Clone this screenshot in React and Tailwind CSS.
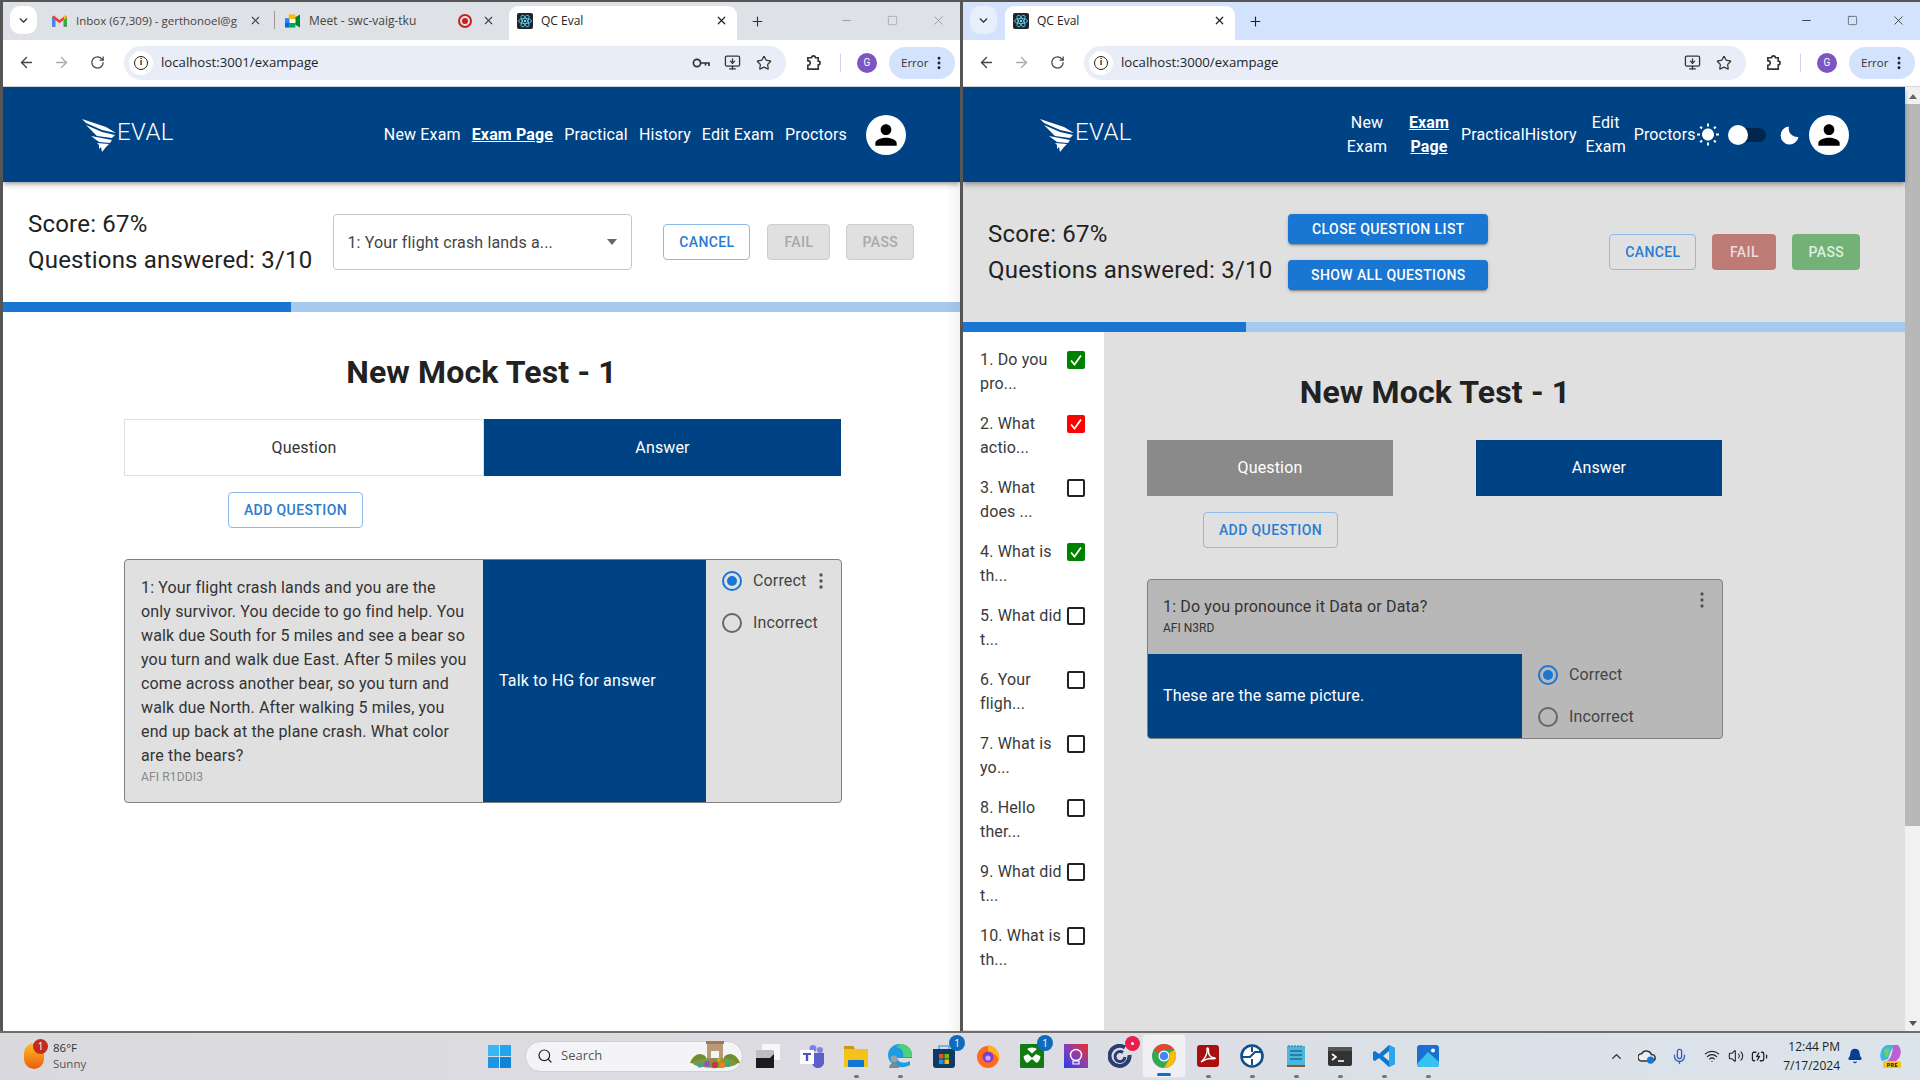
import React from 'react';
import { ArrowLeft, ArrowRight, RotateCw, Star, MonitorDown, EllipsisVertical, Plus, X, Minus, Square, ChevronDown, Search, Mic, Wifi, Volume2, BatteryCharging, Bell, ChevronUp } from 'lucide-react';

const blue = 'bg-[#004385]';

function Avatar() {
  return (
    <div className="w-10 h-10 rounded-full bg-white flex items-center justify-center shrink-0">
      <svg viewBox="0 0 24 24" className="w-8 h-8 fill-black">
        <path d="M12 12c2.21 0 4-1.79 4-4s-1.79-4-4-4-4 1.79-4 4 1.79 4 4 4zm0 2c-2.67 0-8 1.34-8 4v2h16v-2c0-2.66-5.33-4-8-4z" />
      </svg>
    </div>
  );
}

function Logo() {
  return (
    <div className="flex items-center shrink-0 h-10 w-[93px]">
      <svg viewBox="0 0 36 36" className="w-[36px] h-[36px] fill-white shrink-0">
        <path d="M0 3 L24 11 L34 17 L20 14 L4 7 Z" />
        <path d="M4 9 L20 16 L33 19 L30 22 L15 20 Z" />
        <path d="M9 20 L30 24 L28 27 L17 26 Z" />
        <path d="M15 27 L27 28 L24 31 L20 36 L19 31 L17 33 L17 29 Z" />
      </svg>
      <span className="text-white text-[24px] font-light tracking-[0.4px] leading-none -ml-[1px] -mt-[4px]">EVAL</span>
    </div>
  );
}

function ReactIcon() {
  return (
    <svg viewBox="0 0 16 16" className="w-4 h-4 shrink-0">
      <rect width="16" height="16" rx="2" fill="#20232a" />
      <g fill="none" stroke="#61dafb" strokeWidth="0.8">
        <ellipse cx="8" cy="8" rx="6.5" ry="2.6" />
        <ellipse cx="8" cy="8" rx="6.5" ry="2.6" transform="rotate(60 8 8)" />
        <ellipse cx="8" cy="8" rx="6.5" ry="2.6" transform="rotate(120 8 8)" />
      </g>
      <circle cx="8" cy="8" r="1.3" fill="#61dafb" />
    </svg>
  );
}

function GmailIcon() {
  return (
    <svg viewBox="0 0 16 12" className="w-[15px] h-[12px] shrink-0">
      <path d="M0 1.5 V12 H3.5 V5 L8 8.5 L12.5 5 V12 H16 V1.5 L14 0 L8 5 L2 0 Z" fill="#ea4335" />
      <path d="M0 2 V12 H3.5 V5 Z" fill="#4285f4" />
      <path d="M16 2 V12 H12.5 V5 Z" fill="#34a853" />
      <path d="M12.5 5 L16 2 L14 0 L12.5 1.2 Z" fill="#fbbc04" />
    </svg>
  );
}

function MeetIcon() {
  return (
    <svg viewBox="0 0 16 14" className="w-[15px] h-[14px] shrink-0">
      <rect x="0" y="4" width="5" height="6" fill="#2684fc" />
      <rect x="0" y="9" width="5" height="5" fill="#0066da" />
      <path d="M4 0 H11 V5 H4 Z" fill="#fbbc04" />
      <path d="M5 9 H11 V14 H5 Z" fill="#00ac47" />
      <path d="M11 3 L16 0 V14 L11 11 Z" fill="#00832d" />
      <path d="M5 5 H11 V9 H5 Z" fill="#fff" />
    </svg>
  );
}

function BrowserBar({ url, inactive, tabs, showKey }) {
  const tabsBg = inactive ? 'bg-[#dee1e6]' : 'bg-[#d3e3fd]';
  const winIcon = inactive ? 'text-[#8a8c90]' : 'text-[#222]';
  return (
    <div className="shrink-0">
      <div className={`${tabsBg} h-[38px] flex items-end`}>
        <div className={`w-[27px] h-[28px] ml-[7px] mb-[6px] rounded-[10px] flex items-center justify-center shrink-0 ${inactive ? 'bg-white' : 'bg-[#e7effd]'}`}>
          <ChevronDown size={13} strokeWidth={2.5} color="#222" />
        </div>
        {tabs}
        <div className="flex-1" />
        <div className={`flex items-center h-[36px] self-start ${winIcon}`}>
          <Minus size={13} strokeWidth={1.5} />
          <Square size={11} strokeWidth={1.2} className="ml-[34px]" />
          <X size={15} strokeWidth={1.2} className="ml-[33px] mr-[14px]" />
        </div>
      </div>
      <div className="bg-white h-[47px] flex items-center border-b border-[#d8d8d8] text-[#444] pb-[1px]">
        <ArrowLeft size={17} strokeWidth={1.9} className="ml-[15px]" />
        <ArrowRight size={17} strokeWidth={1.9} className="ml-[18px] text-[#aaa]" />
        <RotateCw size={15} strokeWidth={2} className="ml-[20px]" />
        <div className="ml-[19px] w-[662px] h-[34px] rounded-full bg-[#e9edf7] flex items-center pl-[5px] pr-[14px]">
          <div className="w-[24px] h-[24px] rounded-full bg-white flex items-center justify-center shrink-0">
            <div className="w-[14px] h-[14px] rounded-full border-[1.5px] border-[#222] flex items-center justify-center text-[9px] font-bold leading-none text-[#222] font-['Liberation_Sans',sans-serif]">i</div>
          </div>
          <span className="ml-[8px] text-[13.2px] text-[#1f1f1f] font-['Open_Sans',sans-serif]">{url}</span>
          <div className="flex-1" />
          {showKey && (
            <svg viewBox="0 0 18 12" className="w-[18px] h-[12px] mr-[14px]" fill="none" stroke="#333" strokeWidth="1.7">
              <circle cx="5" cy="6" r="3.6" />
              <path d="M8.6 6 H17 V9 M13.5 6 V8.5" />
            </svg>
          )}
          <MonitorDown size={17} strokeWidth={1.8} className="mr-[15px] text-[#333]" />
          <Star size={16} strokeWidth={1.8} className="text-[#333]" />
        </div>
        <svg viewBox="0 0 18 18" className="w-[17px] h-[17px] ml-[19px]" fill="none" stroke="#333" strokeWidth="1.7">
          <path d="M3 4 H7 a2 2 0 0 1 4 0 H14 V7.5 a2 2 0 0 1 0 4 V16 H3 V12 a2.5 2.5 0 0 0 0-5 Z" />
        </svg>
        <div className="w-px h-[18px] bg-[#c7d8f0] ml-[18px]" />
        <div className="w-[20px] h-[20px] rounded-full bg-[#7d57c1] text-white text-[10px] flex items-center justify-center ml-[16px]">G</div>
        <div className="ml-[12px] w-[66px] h-[32px] rounded-full bg-[#d3e3fd] flex items-center pl-[12px] text-[11.5px] text-[#333] font-['Open_Sans',sans-serif]">
          Error
          <EllipsisVertical size={16} strokeWidth={2.4} className="ml-[3px] text-[#222]" />
        </div>
      </div>
    </div>
  );
}

function ActiveTab({ width }) {
  return (
    <div className={`${width} h-[34px] bg-white rounded-t-[9px] flex items-center pl-[8px] pr-[9px] pb-[5px] text-[12px] text-[#222] font-['Open_Sans',sans-serif] shrink-0`}>
      <ReactIcon />
      <span className="ml-[8px] flex-1">QC Eval</span>
      <X size={13} strokeWidth={2.2} />
    </div>
  );
}

function Radio({ checked, label, pad }) {
  return (
    <div className={`h-[42px] flex items-center ${pad}`}>
      <div className={`w-[20px] h-[20px] rounded-full border-2 flex items-center justify-center shrink-0 ${checked ? 'border-[#1976d2]' : 'border-[#666]'}`}>
        {checked && <div className="w-[10px] h-[10px] rounded-full bg-[#1976d2]" />}
      </div>
      <span className="ml-[11px] text-[16px] tracking-[0.15px] text-[#444]">{label}</span>
    </div>
  );
}

function OutlineBtn({ children, className }) {
  return (
    <button className={`h-[36px] border border-[#8dbae8] rounded-[4px] text-[#2a7cd0] text-[14px] font-medium tracking-[0.4px] uppercase flex items-center justify-center shrink-0 ${className}`}>
      {children}
    </button>
  );
}

function Dots({ className }) {
  return (
    <svg viewBox="0 0 4 16" className={`w-[4px] h-[16px] fill-[#555] ${className || ''}`}>
      <circle cx="2" cy="2" r="1.7" />
      <circle cx="2" cy="8" r="1.7" />
      <circle cx="2" cy="14" r="1.7" />
    </svg>
  );
}

function ScoreBlock() {
  return (
    <div className="text-[24px] leading-[36px] text-[#222] shrink-0 whitespace-nowrap tracking-[0.2px]">
      <div>Score: 67%</div>
      <div>Questions answered: 3/10</div>
    </div>
  );
}

function LeftWindow() {
  const nav = ['New Exam', 'Exam Page', 'Practical', 'History', 'Edit Exam', 'Proctors'];
  return (
    <div className="w-[960px] h-full flex flex-col border-l-[3px] border-t-2 border-[#555] relative overflow-hidden">
      <BrowserBar
        url="localhost:3001/exampage"
        inactive
        showKey
        tabs={
          <div className="flex items-end ml-[11px] self-stretch text-[12px] text-[#444] font-['Open_Sans',sans-serif]">
            <div className="w-[226px] h-[34px] flex items-center pl-[4px] pr-[12px] pb-[5px] shrink-0">
              <GmailIcon />
              <span className="ml-[9px] text-[11.5px] whitespace-nowrap">Inbox (67,309) - gerthonoel@g</span>
              <X size={13} strokeWidth={2} className="ml-auto" />
            </div>
            <div className="w-px h-[18px] bg-[#999] mb-[11px]" />
            <div className="w-[234px] h-[34px] flex items-center pl-[10px] pr-[14px] pb-[5px] shrink-0">
              <MeetIcon />
              <span className="ml-[9px] flex-1">Meet - swc-vaig-tku</span>
              <div className="w-[14px] h-[14px] rounded-full border-2 border-[#c5221f] flex items-center justify-center mr-[10px]">
                <div className="w-[6px] h-[6px] rounded-full bg-[#c5221f]" />
              </div>
              <X size={13} strokeWidth={2} />
            </div>
            <ActiveTab width="w-[228px]" />
            <Plus size={15} strokeWidth={1.8} className="ml-[13px] mb-[11px] text-[#333]" />
          </div>
        }
      />
      <header className={`${blue} h-[95px] pb-[2px] shrink-0 flex items-center pl-[79px] pr-[54px] relative z-10 shadow-[0_2px_4px_-1px_rgba(0,0,0,0.3),0_4px_5px_rgba(0,0,0,0.14)]`}>
        <Logo />
        <nav className="ml-auto flex items-center gap-[11px] text-white text-[16px] tracking-[0.15px] mt-[2px]">
          {nav.map((n) => (
            <span key={n} className={n === 'Exam Page' ? 'font-bold underline' : ''}>{n}</span>
          ))}
        </nav>
        <div className="ml-[19px] mt-[2px]"><Avatar /></div>
      </header>
      <main className="flex-1 bg-white">
        <div className="h-[120px] flex items-center pl-[25px]">
          <ScoreBlock />
          <div className="ml-[21px] w-[299px] h-[56px] border border-[#c4c4c4] rounded-[4px] flex items-center justify-between pl-[13px] pr-[14px] text-[16px] text-[#444] tracking-[0.15px] shrink-0">
            <span className="mt-[1px]">1: Your flight crash lands a...</span>
            <svg viewBox="0 0 10 6" className="w-[10px] h-[6px] fill-[#666]"><path d="M0 0 H10 L5 6 Z" /></svg>
          </div>
          <OutlineBtn className="ml-[31px] w-[87px]">Cancel</OutlineBtn>
          <div className="ml-[17px] w-[63px] h-[36px] rounded-[4px] bg-[#e0e0e0] border border-[#ccc] text-[#a8a8a8] text-[14px] font-medium tracking-[0.4px] flex items-center justify-center">FAIL</div>
          <div className="ml-[16px] w-[68px] h-[36px] rounded-[4px] bg-[#e0e0e0] border border-[#ccc] text-[#a8a8a8] text-[14px] font-medium tracking-[0.4px] flex items-center justify-center">PASS</div>
        </div>
        <div className="h-[10px] bg-[#a6caed]"><div className="w-[288px] h-full bg-[#1976d2]" /></div>
        <h1 className="mt-[40px] h-[40px] leading-[40px] text-center text-[32px] font-bold tracking-[0.15px] text-[#222]">New Mock Test - 1</h1>
        <div className="mt-[27px] ml-[121px] w-[717px] h-[57px] flex text-[16px] tracking-[0.15px]">
          <div className="w-[360px] border border-[#e0e0e0] flex items-center justify-center text-[#333]">Question</div>
          <div className={`flex-1 ${blue} text-white flex items-center justify-center`}>Answer</div>
        </div>
        <OutlineBtn className="mt-[16px] ml-[225px] w-[135px] h-[35px]">Add Question</OutlineBtn>
        <div className="mt-[31px] ml-[121px] w-[718px] h-[244px] rounded-[4px] border border-[#808080] bg-[#e0e0e0] flex overflow-hidden">
          <div className="w-[358px] pl-[16px] pr-[15px] pt-[16px] text-[16px] leading-[24px] text-[#333] tracking-[0.15px]">
            <div>1: Your flight crash lands and you are the only survivor. You decide to go find help. You walk due South for 5 miles and see a bear so you turn and walk due East. After 5 miles you come across another bear, so you turn and walk due North. After walking 5 miles, you end up back at the plane crash. What color are the bears?</div>
            <div className="text-[12px] leading-[16px] mt-px text-[#888]">AFI R1DDI3</div>
          </div>
          <div className={`w-[223px] ${blue} text-white text-[16px] tracking-[0.15px] flex items-center pl-[16px]`}>Talk to HG for answer</div>
          <div className="flex-1 relative">
            <Radio checked label="Correct" pad="pl-[16px]" />
            <Radio label="Incorrect" pad="pl-[16px]" />
            <Dots className="absolute right-[18px] top-[13px]" />
          </div>
        </div>
      </main>
      <div className="absolute top-[86px] right-0 bottom-0 w-[14px] bg-gradient-to-r from-transparent to-black/5 z-20" />
    </div>
  );
}

function SideRow({ n, a, b, state }) {
  return (
    <div className="h-[64px] flex pl-[17px] text-[16px] leading-[24px] text-[#3a3a3a] tracking-[0.15px]">
      <div className="w-[87px] whitespace-nowrap">
        <div>{n}. {a}</div>
        <div>{b}</div>
      </div>
      {state ? (
        <div className={`w-[18px] h-[18px] mt-[3px] rounded-[2px] flex items-center justify-center ${state === 'ok' ? 'bg-[#008000]' : 'bg-[#ff0000]'}`}>
          <svg viewBox="0 0 18 18" className="w-[18px] h-[18px]" fill="none" stroke="#fff" strokeWidth="1.8"><path d="M4 9.5 L7.5 13.5 L14 4.5" /></svg>
        </div>
      ) : (
        <div className="w-[18px] h-[18px] mt-[3px] rounded-[2px] border-2 border-[#222]" />
      )}
    </div>
  );
}

function RightWindow() {
  const rows = [
    ['Do you', 'pro...', 'ok'],
    ['What', 'actio...', 'bad'],
    ['What', 'does ...'],
    ['What is', 'th...', 'ok'],
    ['What did', 't...'],
    ['Your', 'fligh...'],
    ['What is', 'yo...'],
    ['Hello', 'ther...'],
    ['What did', 't...'],
    ['What is', 'th...'],
  ];
  return (
    <div className="w-[960px] h-full flex flex-col border-l-[3px] border-t-2 border-[#555] overflow-hidden">
      <BrowserBar
        url="localhost:3000/exampage"
        tabs={<div className="flex items-end ml-[8px] self-stretch"><ActiveTab width="w-[230px]" /><Plus size={15} strokeWidth={1.8} className="ml-[13px] mb-[11px] text-[#222]" /></div>}
      />
      <div className="flex-1 flex min-h-0">
        <div className="flex-1 flex flex-col min-w-0">
          <header className={`${blue} h-[95px] pb-[2px] shrink-0 flex items-center pl-[77px] text-white text-[16px] tracking-[0.15px] relative z-10 shadow-[0_2px_4px_-1px_rgba(0,0,0,0.3),0_4px_5px_rgba(0,0,0,0.14)]`}>
            <Logo />
            <nav className="ml-[204px] flex items-center text-center leading-[24px] mt-[2px] shrink-0">
              <span className="w-[60px]">New<br />Exam</span>
              <span className="w-[42px] ml-[11px] font-bold underline">Exam<br />Page</span>
              <span className="ml-[11px]">Practical</span>
              <span>History</span>
              <span className="w-[42px] ml-[8px]">Edit<br />Exam</span>
              <span className="ml-[7px]">Proctors</span>
            </nav>
            <svg viewBox="0 0 24 24" className="w-[24px] h-[24px] fill-white mt-[2px] shrink-0">
              <path d="M6.76 4.84l-1.8-1.79-1.41 1.41 1.79 1.79 1.42-1.41zM4 10.5H1v2h3v-2zm9-9.95h-2V3.5h2V.55zm7.45 3.91l-1.41-1.41-1.79 1.79 1.41 1.41 1.79-1.79zm-3.21 13.7l1.79 1.8 1.41-1.41-1.8-1.79-1.4 1.4zM20 10.5v2h3v-2h-3zm-8-5c-3.31 0-6 2.69-6 6s2.69 6 6 6 6-2.69 6-6-2.69-6-6-6zm-1 16.95h2V19.5h-2v2.95zm-7.45-3.91l1.41 1.41 1.79-1.8-1.41-1.41-1.79 1.8z" />
            </svg>
            <div className="ml-[9px] w-[37px] h-[14px] rounded-full bg-[#00264d] relative mt-[2px] shrink-0">
              <div className="absolute -left-[1px] -top-[3px] w-[20px] h-[20px] rounded-full bg-white" />
            </div>
            <svg viewBox="0 0 24 24" className="ml-[12px] w-[24px] h-[24px] fill-white mt-[2px] shrink-0">
              <path d="M11 3.5 A9 9 0 1 0 20.5 14 A8.5 8.5 0 0 1 11 3.5 Z" />
            </svg>
            <div className="ml-[7px] mt-[2px]"><Avatar /></div>
          </header>
          <div className="flex-1 bg-[#e0e0e0]">
            <div className="h-[140px] flex items-center pl-[25px]">
              <ScoreBlock />
              <div className="ml-[16px] flex flex-col gap-[16px] shrink-0">
                <div className="w-[200px] h-[30px] rounded-[4px] bg-[#1976d2] text-white text-[14px] font-medium tracking-[0.4px] flex items-center justify-center shadow-[0_3px_1px_-2px_rgba(0,0,0,0.2),0_2px_2px_rgba(0,0,0,0.14),0_1px_5px_rgba(0,0,0,0.12)]">CLOSE QUESTION LIST</div>
                <div className="w-[200px] h-[30px] rounded-[4px] bg-[#1976d2] text-white text-[14px] font-medium tracking-[0.4px] flex items-center justify-center shadow-[0_3px_1px_-2px_rgba(0,0,0,0.2),0_2px_2px_rgba(0,0,0,0.14),0_1px_5px_rgba(0,0,0,0.12)]">SHOW ALL QUESTIONS</div>
              </div>
              <OutlineBtn className="ml-[121px] w-[87px]">Cancel</OutlineBtn>
              <div className="ml-[16px] w-[64px] h-[36px] rounded-[4px] bg-[#be7a75] text-[#eadcdb] text-[14px] font-medium tracking-[0.4px] flex items-center justify-center">FAIL</div>
              <div className="ml-[16px] w-[68px] h-[36px] rounded-[4px] bg-[#72b277] text-[#e0eee1] text-[14px] font-medium tracking-[0.4px] flex items-center justify-center">PASS</div>
            </div>
            <div className="h-[10px] bg-[#a6caed]"><div className="w-[283px] h-full bg-[#1976d2]" /></div>
            <div className="flex">
              <aside className="w-[141px] h-[698px] bg-white pt-[16px] shrink-0">
                {rows.map((r, i) => <SideRow key={i} n={i + 1} a={r[0]} b={r[1]} state={r[2]} />)}
              </aside>
              <section className="ml-[43px] w-[576px]">
                <h1 className="mt-[40px] h-[40px] leading-[40px] text-center text-[32px] font-bold tracking-[0.15px] text-[#222]">New Mock Test - 1</h1>
                <div className="mt-[28px] w-[575px] h-[56px] flex justify-between text-[16px] tracking-[0.15px] text-white">
                  <div className="w-[246px] bg-[#8a8a8a] flex items-center justify-center">Question</div>
                  <div className={`w-[246px] ${blue} flex items-center justify-center`}>Answer</div>
                </div>
                <OutlineBtn className="mt-[16px] ml-[56px] w-[135px] h-[35px]">Add Question</OutlineBtn>
                <div className="mt-[31px] h-[160px] rounded-[4px] border border-[#808080] bg-[#b8b8b8] overflow-hidden relative">
                  <div className="h-[74px] pl-[15px] pt-[15px] text-[#333]">
                    <div className="text-[16px] leading-[24px] tracking-[0.15px]">1: Do you pronounce it Data or Data?</div>
                    <div className="text-[12px] leading-[16px] mt-px">AFI N3RD</div>
                  </div>
                  <Dots className="absolute right-[18px] top-[12px]" />
                  <div className="flex h-[84px]">
                    <div className={`w-[374px] ${blue} text-white text-[16px] tracking-[0.15px] flex items-center pl-[15px]`}>These are the same picture.</div>
                    <div className="flex-1">
                      <Radio checked label="Correct" pad="pl-[16px]" />
                      <Radio label="Incorrect" pad="pl-[16px]" />
                    </div>
                  </div>
                </div>
              </section>
            </div>
          </div>
        </div>
        <div className="w-[15px] shrink-0 bg-[#f1f1f1] flex flex-col items-center">
          <svg viewBox="0 0 8 5" className="w-[8px] h-[5px] fill-[#666] mt-[7px] mb-[5px]"><path d="M4 0 L8 5 H0 Z" /></svg>
          <div className="w-full h-[722px] bg-[#b8b8b8]" />
          <div className="flex-1" />
          <svg viewBox="0 0 8 5" className="w-[8px] h-[5px] fill-[#555] mb-[5px]"><path d="M0 0 H8 L4 5 Z" /></svg>
        </div>
      </div>
    </div>
  );
}

// taskbar icons, all hand drawn on a 24 box
const box = 'w-[24px] h-[24px]';
const taskIcons = [
  { icon: <svg viewBox="0 0 24 24" className={box}><rect x="6" y="0" width="18" height="16" rx="1" fill="#f8f8f8" /><rect x="0" y="6" width="18" height="18" rx="1" fill="#bdbdbd" /><path d="M0 14 H14 L18 10 V24 H0 Z" fill="#1c1c1c" /></svg> },
  { icon: <svg viewBox="0 0 24 24" className={box}><circle cx="20" cy="6" r="3" fill="#7b83eb" /><path d="M10 9 H24 V17 a6 6 0 0 1-12 2 Z" fill="#5b5fc7" /><circle cx="13" cy="4.5" r="3.5" fill="#7b83eb" /><rect x="0" y="6" width="14" height="14" fill="#fff" /><path d="M3 9 H11 V11 H8.2 V17 H5.8 V11 H3 Z" fill="#4b53bc" /></svg> },
  { dot: true, icon: <svg viewBox="0 0 24 24" className={box}><path d="M0 2 H9 L11 5 H24 V23 H0 Z" fill="#f5c21b" /><path d="M0 2 H9 L11 5 H0 Z" fill="#c9961a" /><rect x="4" y="16" width="16" height="7" rx="1" fill="#0f78d4" /></svg> },
  { dot: true, icon: <svg viewBox="0 0 24 24" className={box}><path d="M0 11 A12 11 0 0 1 24 11 V14 H9 C10 19 17 20 22 17 V21 C14 26 0 22 0 11Z" fill="#1b9de2" /><path d="M13 0 A12 11 0 0 1 24 13 H15 C16 8 14 4 8 3 Z" fill="#4fd07b" /><circle cx="6" cy="15" r="3.5" fill="#9aa0a6" /><path d="M1 24 a5 5 0 0 1 10 0Z" fill="#80868b" /></svg> },
  { badge: '1', icon: <svg viewBox="0 0 24 24" className={box}><path d="M1 5 H23 V21 a3 3 0 0 1-3 3 H4 a3 3 0 0 1-3-3 Z" fill="#0f3a66" /><path d="M7 5 V2 H17 V5" fill="none" stroke="#5aa7e0" strokeWidth="1.6" /><rect x="7" y="10" width="4.5" height="4.5" fill="#f25022" /><rect x="12.5" y="10" width="4.5" height="4.5" fill="#7fba00" /><rect x="7" y="15.5" width="4.5" height="4.5" fill="#00a4ef" /><rect x="12.5" y="15.5" width="4.5" height="4.5" fill="#ffb900" /></svg> },
  { icon: <svg viewBox="0 0 24 24" className={box}><circle cx="12" cy="13" r="11" fill="#ff6a1f" /><path d="M12 1 C20 2 25 10 23 17 C21 10 16 8 12 8 Z" fill="#ffb01f" /><circle cx="12" cy="13" r="5.5" fill="#7a3fd0" /><circle cx="12" cy="14" r="2.6" fill="#c9a4f5" /></svg> },
  { badge: '1', icon: <svg viewBox="0 0 24 24" className={box}><rect x="0" y="0" width="24" height="24" rx="1" fill="#107c10" /><circle cx="12" cy="12" r="8.5" fill="#fff" /><path d="M6 4 L12 9.5 L18 4 L22 13 L16 10 L12 14 L8 10 L2 13 Z M6 20 L12 15 L18 20 L12 23 Z" fill="#107c10" /></svg> },
  { icon: <svg viewBox="0 0 24 24" className={box}><defs><linearGradient id="cc" x1="0" y1="1" x2="1" y2="0"><stop offset="0" stopColor="#2a3bf0" /><stop offset="0.5" stopColor="#8a3fb0" /><stop offset="1" stopColor="#f02a2a" /></linearGradient></defs><rect width="24" height="24" fill="url(#cc)" /><circle cx="12" cy="11" r="5.5" fill="none" stroke="#fff" strokeWidth="1.4" /><path d="M9 17 H15 V20 H9 Z" fill="none" stroke="#fff" strokeWidth="1.2" /></svg> },
  { badge: 'dot', icon: <svg viewBox="0 0 24 24" className={box}><path d="M17 3.5 A10 10 0 1 0 21.5 11" fill="none" stroke="#2b3e72" strokeWidth="4" /><path d="M15 8.5 A5 5 0 1 0 17 13" fill="none" stroke="#2b3e72" strokeWidth="3" /></svg> },
  { chrome: true, icon: <svg viewBox="0 0 24 24" className={box}><circle cx="12" cy="12" r="12" fill="#34a853" /><path d="M12 0 A12 12 0 0 1 22.4 6 H12 A6 6 0 0 0 6.8 9 L1.6 6 A12 12 0 0 1 12 0Z" fill="#ea4335" /><path d="M22.4 6 A12 12 0 0 1 12 24 L17.2 15 A6 6 0 0 0 17.2 9 Z" fill="#fbbc04" /><circle cx="12" cy="12" r="5.5" fill="#fff" /><circle cx="12" cy="12" r="4.3" fill="#4285f4" /></svg> },
  { dot: true, icon: <svg viewBox="0 0 24 24" className={box}><rect x="1" y="1" width="22" height="22" rx="3" fill="#a80f0f" /><path d="M5 18 C9 15 12 9 11 5 C11 3 13 4 12.5 7 C12 11 15 14 19 14 C20 15 16 15 13 14.5 C10 15 7 17 5 18Z" fill="none" stroke="#fff" strokeWidth="1.4" /></svg> },
  { dot: true, icon: <svg viewBox="0 0 24 24" className={box}><circle cx="12" cy="12" r="10.5" fill="#fff" stroke="#0f4f8a" strokeWidth="2.6" /><path d="M2 13 H10 L15 8 H22 M12 3 V8 M12 15 V21" fill="none" stroke="#0f4f8a" strokeWidth="2" /></svg> },
  { dot: true, icon: <svg viewBox="0 0 24 24" className={box}><rect x="3" y="2" width="18" height="20" fill="#4db6dc" /><path d="M6 7 H18 M6 11 H18 M6 15 H18" stroke="#1a6f94" strokeWidth="1.6" /><rect x="3" y="21" width="18" height="2" fill="#8a5a2b" /><path d="M5 1 V3 M8 1 V3 M11 1 V3 M14 1 V3 M17 1 V3" stroke="#2a6f94" strokeWidth="1" /></svg> },
  { dot: true, icon: <svg viewBox="0 0 24 24" className={box}><rect x="0" y="3" width="24" height="19" rx="2" fill="#333" /><rect x="0" y="3" width="24" height="4" fill="#555" /><path d="M4 10 L8 13 L4 16" fill="none" stroke="#fff" strokeWidth="1.6" /><path d="M10 17 H16" stroke="#fff" strokeWidth="1.6" /></svg> },
  { dot: true, icon: <svg viewBox="0 0 24 24" className={box}><path d="M17 1 L23 4 V20 L17 23 L7 14 L3 17 L1 16 V8 L3 7 L7 10 Z" fill="#0a78d0" /><path d="M17 1 L23 4 V20 L17 23 Z" fill="#2aa5ee" /><path d="M17 7 L11 12 L17 17 Z" fill="#e2e2e6" /></svg> },
  { dot: true, icon: <svg viewBox="0 0 24 24" className={box}><rect x="1" y="1" width="22" height="22" rx="3" fill="#1c6fd0" /><path d="M1 20 L12 8 L23 18 V20 a3 3 0 0 1-3 3 H4 a3 3 0 0 1-3-3Z" fill="#36c2f0" /><circle cx="17" cy="6.5" r="2" fill="#fff" /></svg> },
];

function Taskbar() {
  return (
    <div className="h-[49px] shrink-0 border-t-2 border-[#6e6e6e] bg-gradient-to-r from-[#dadade] via-[#dcdce2] to-[#dbe4ec] flex items-center relative pb-[1px] font-['Open_Sans',sans-serif]">
      <div className="w-[490px] flex items-center shrink-0">
        <div className="ml-[24px] w-[20px] h-[26px] rounded-full bg-gradient-to-b from-[#fbbf24] to-[#ea580c] relative">
          <div className="absolute -top-[4px] left-[9px] w-[15px] h-[15px] rounded-full bg-[#c42b1c] text-white text-[10px] flex items-center justify-center">1</div>
        </div>
        <div className="ml-[9px] text-[11.5px] leading-[16px] text-[#333]">
          <div>86°F</div>
          <div className="text-[#555]">Sunny</div>
        </div>
      </div>
      <div className="w-[23px] h-[23px] grid grid-cols-2 gap-[1px] shrink-0 -ml-[2px]">
        <div className="bg-[#3ab6f5]" /><div className="bg-[#22a4ee]" /><div className="bg-[#1c96e4]" /><div className="bg-[#0f84d8]" />
      </div>
      <div className="ml-[14px] w-[218px] h-[31px] rounded-full bg-[#f4f4f6] border border-[#d0d0d4] flex items-center pl-[11px] text-[#555] text-[13px] shrink-0">
        <Search size={16} strokeWidth={1.8} color="#222" />
        <span className="ml-[8px]">Search</span>
        <svg viewBox="0 0 50 27" className="ml-auto mr-[2px] w-[50px] h-[27px] -mt-[3px] overflow-visible">
          <path d="M0 22 C3 14 10 10 16 16 V24 Z" fill="#6f8f2e" />
          <path d="M50 22 C47 14 40 10 34 16 V24 Z" fill="#6f8f2e" />
          <path d="M17 2 H33 V20 H29 V10 H21 V20 H17 Z" fill="#b89a78" />
          <rect x="16" y="0" width="18" height="3" fill="#9a7c5a" />
          <ellipse cx="25" cy="22" rx="22" ry="5" fill="#7c9a3a" />
          <circle cx="10" cy="24" r="2.6" fill="#3aa0b0" /><circle cx="17" cy="23" r="3" fill="#8a58c0" /><circle cx="25" cy="24" r="3.2" fill="#c83a3a" /><circle cx="32" cy="24" r="3" fill="#ef7f20" /><circle cx="38" cy="23.5" r="2.4" fill="#30a8a0" /><circle cx="21" cy="19" r="1.8" fill="#e0559a" /><circle cx="29" cy="19" r="1.8" fill="#eaa020" />
        </svg>
      </div>
      <div className="ml-[3px] flex items-center shrink-0">
        {taskIcons.map((t, i) => (
          <div key={i} className={`w-[44px] h-[44px] flex items-center justify-center relative rounded-[4px] ${t.chrome ? 'bg-[#f0f0f4] border border-[#e4e4e8]' : ''}`}>
            {t.icon}
            {t.badge === '1' && <div className="absolute top-[1px] right-[1px] w-[16px] h-[16px] rounded-full bg-[#0f6cbd] text-white text-[10px] flex items-center justify-center">1</div>}
            {t.badge === 'dot' && <div className="absolute top-[2px] right-[2px] w-[15px] h-[15px] rounded-full bg-[#e81e4d] flex items-center justify-center"><div className="w-[3px] h-[3px] rounded-full bg-white" /></div>}
            {t.dot && <div className="absolute bottom-[0px] w-[5px] h-[3px] rounded-full bg-[#777]" />}
            {t.chrome && <div className="absolute bottom-[1px] w-[14px] h-[3px] rounded-full bg-[#0f6cd5]" />}
          </div>
        ))}
      </div>
      <div className="ml-auto flex items-center text-[#222] shrink-0">
        <ChevronUp size={15} strokeWidth={2} />
        <svg viewBox="0 0 20 16" className="ml-[14px] w-[18px] h-[15px]"><path d="M4 13 a4 4 0 0 1 0-8 a6 6 0 0 1 11 1 a3.5 3.5 0 0 1 1 7 Z" fill="#eee" stroke="#333" strokeWidth="1.6" /><circle cx="14" cy="12" r="4" fill="#0f78d4" /></svg>
        <Mic size={17} strokeWidth={1.8} className="ml-[15px] text-[#2a5fc0]" />
        <Wifi size={16} strokeWidth={1.8} className="ml-[16px]" />
        <Volume2 size={16} strokeWidth={1.6} className="ml-[8px]" />
        <BatteryCharging size={17} strokeWidth={1.8} className="ml-[7px]" />
        <div className="ml-[15px] text-[12px] leading-[19px] text-right text-[#222]">
          <div>12:44 PM</div>
          <div>7/17/2024</div>
        </div>
        <Bell size={16} strokeWidth={2} className="ml-[7px] fill-[#0a3d91] text-[#0a3d91]" />
        <svg viewBox="0 0 24 26" className="ml-[15px] mr-[18px] w-[24px] h-[26px]">
          <path d="M4 18 C0 12 4 2 10 2 H18 C14 4 12 10 10 16 Z" fill="#3ab6e8" />
          <path d="M20 2 C24 6 24 14 18 18 H9 C13 16 15 8 15 2 Z" fill="#c060d0" />
          <path d="M6 10 C6 6 9 4 12 6 L9 15 Z" fill="#70d060" />
          <rect x="5" y="18" width="18" height="7" rx="1.5" fill="#f5c518" />
          <text x="14" y="24" textAnchor="middle" fontSize="6" fontWeight="bold" fill="#222">PRE</text>
        </svg>
      </div>
    </div>
  );
}

export default function App() {
  return (
    <div className="w-[1920px] h-[1080px] flex flex-col overflow-hidden font-['Roboto',sans-serif] bg-white">
      <div className="h-[1031px] flex shrink-0 overflow-hidden">
        <LeftWindow />
        <RightWindow />
      </div>
      <Taskbar />
    </div>
  );
}
